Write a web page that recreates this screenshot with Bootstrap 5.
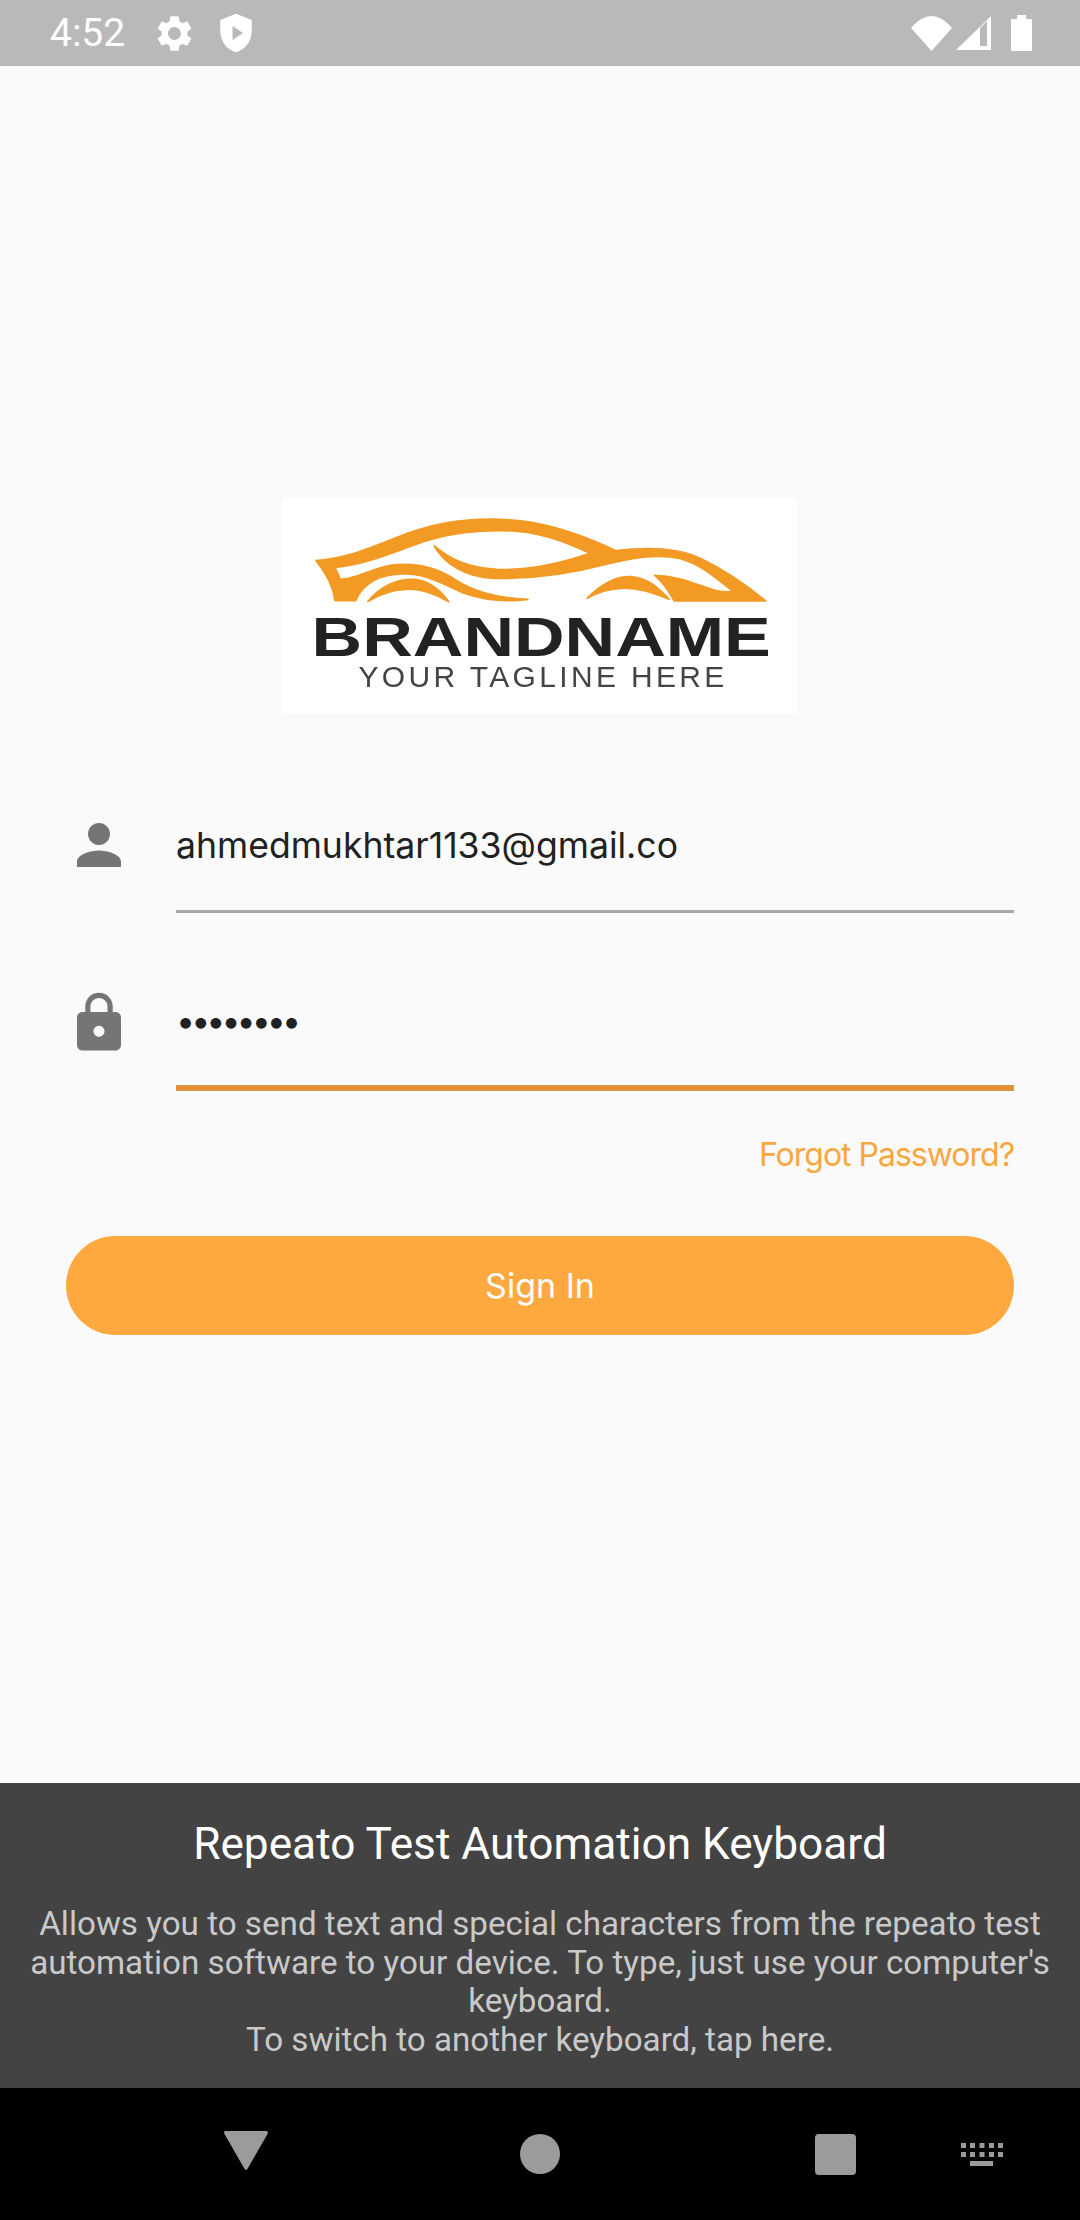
<!doctype html>
<html lang="en">

<head>
    <meta charset="utf-8">
    <meta name="viewport" content="width=device-width, initial-scale=1">
    <title>Sign In</title>
    <link href="https://cdn.jsdelivr.net/npm/bootstrap@5.3.1/dist/css/bootstrap.min.css" rel="stylesheet">
    <style>
        body {
            height: 2220px;
            overflow: hidden;
            background: #fafafa;
            font-family: "Inter", "Open Sans", sans-serif;
        }

        .status-strip {
            height: 66px;
            padding: 0 48px 0 50px;
            background: #b9b9b9;
            color: #fff;
            font-family: "Roboto", sans-serif;
            font-size: 39px;
        }

        .status-clock {
            margin-right: 28px;
            line-height: 66px;
        }

        .status-shield {
            margin-left: 19px;
        }

        .status-battery {
            margin-left: 20px;
        }

        .login-area {
            padding: 432px 66px 0;
        }

        .brand-logo {
            display: block;
            width: 515px;
            height: 216px;
            margin: 0 auto 98px 216px;
            background: #fff;
            filter: blur(.6px);
        }

        .car-shape {
            fill: #f39a24;
            stroke: #f39a24;
            stroke-width: 5;
            stroke-linejoin: round;
        }

        .field-icon {
            flex: 0 0 66px;
            width: 66px;
            height: 66px;
            margin-right: 44px;
            fill: #757575;
        }

        .field-row {
            margin-bottom: 77px;
        }

        .field-input.form-control {
            height: 101px;
            padding: 0 0 32px;
            border: 0;
            border-bottom: 3px solid #a8a8a8;
            border-radius: 0;
            background: transparent;
            color: #212121;
            font-size: 35.600px;
            box-shadow: none;
        }

        .field-input.field-active {
            padding-bottom: 35px;
            border-bottom: 6px solid #e09439;
            font-size: 34px;
            letter-spacing: -4px;
        }

        .forgot-row {
            margin-top: -35px;
            margin-bottom: 59px;
            color: #f9a63f;
            font-size: 32px;
            letter-spacing: -1px;
            line-height: 44px;
        }

        .signin-btn.btn {
            height: 99px;
            background: #fea93f;
            border: 0;
            color: #fff;
            font-size: 34px;
        }

        .keyboard-panel {
            height: 305px;
            padding: 36px 22px 0;
            background: #434343;
            font-family: "Roboto", sans-serif;
        }

        .keyboard-title {
            margin: 0 0 36px;
            color: #fff;
            font-size: 44.200px;
            font-weight: 400;
            line-height: 50px;
        }

        .keyboard-text {
            margin: 0;
            color: #c9c9c9;
            font-size: 33.200px;
            line-height: 38.700px;
        }

        .nav-strip {
            height: 132px;
            background: #000;
            fill: #9b9b9b;
        }

        .nav-back {
            margin: 43px 0 0 224px;
        }

        .nav-home {
            margin: 46px 0 0 252px;
        }

        .nav-recent {
            margin: 46px 0 0 255px;
        }

        .nav-keyboard {
            margin: 55px 0 0 105px;
        }
    </style>
</head>

<body class="d-flex flex-column">
    <div class="status-strip d-flex align-items-center flex-shrink-0">
        <span class="status-clock">4:52</span>
        <svg width="43" height="43" viewBox="0 0 24 24" fill="#fff">
            <path d="M19.14 12.94c.04-.3.06-.61.06-.94 0-.32-.02-.64-.07-.94l2.03-1.58c.18-.14.23-.41.12-.61l-1.92-3.32c-.12-.22-.37-.29-.59-.22l-2.39.96c-.5-.38-1.03-.7-1.62-.94l-.36-2.54c-.04-.24-.24-.41-.48-.41h-3.84c-.24 0-.43.17-.47.41l-.36 2.54c-.59.24-1.13.57-1.62.94l-2.39-.96c-.22-.08-.47 0-.59.22L2.74 8.87c-.12.21-.08.47.12.61l2.03 1.58c-.05.3-.09.63-.09.94s.02.64.07.94l-2.03 1.58c-.18.14-.23.41-.12.61l1.92 3.32c.12.22.37.29.59.22l2.39-.96c.5.38 1.03.7 1.62.94l.36 2.54c.05.24.24.41.48.41h3.84c.24 0 .44-.17.47-.41l.36-2.54c.59-.24 1.13-.56 1.62-.94l2.39.96c.22.08.47 0 .59-.22l1.92-3.32c.12-.22.07-.47-.12-.61l-2.01-1.58zM12 15.6c-1.98 0-3.6-1.62-3.6-3.6s1.62-3.6 3.6-3.6 3.6 1.62 3.6 3.6-1.62 3.6-3.6 3.6z" />
        </svg>
        <svg class="status-shield" width="42" height="42" viewBox="0 0 24 24" fill="#fff">
            <path fill-rule="evenodd" d="M12 1 3 4.5V11c0 5.5 3.8 10.700 9 12 5.200-1.300 9-6.500 9-12V4.500zM10 8l6 4-6 4z" />
        </svg>
        <svg class="ms-auto" width="41" height="35" viewBox="0 0 41 35" fill="#fff">
            <path d="M0 12Q20.500-12 41 12L20.500 35z" />
        </svg>
        <svg class="ms-1" width="35" height="34" viewBox="0 0 35 34" fill="#fff">
            <path d="M0 34 35 0v34z" />
            <path fill="#b9b9b9" d="M24 12l7-7v25h-7z" />
        </svg>
        <svg class="status-battery" width="21" height="36" viewBox="0 0 21 36" fill="#fff">
            <path d="M6 0h9v4h5a1 1 0 0 1 1 1v30a1 1 0 0 1-1 1H1a1 1 0 0 1-1-1V5a1 1 0 0 1 1-1h5z" />
        </svg>
    </div>

    <main class="login-area flex-grow-1">
        <svg class="brand-logo" viewBox="36 24 1495 648" preserveAspectRatio="none">
            <path class="car-shape" d="M135 212C230 205 300 170 400 130 520 85 640 78 760 97 860 115 940 150 1005 182 1100 170 1190 175 1250 205 1330 245 1390 290 1440 333L1175 333C1160 305 1140 275 1118 256 1190 258 1240 285 1290 300 1310 306 1330 306 1345 304 1300 270 1260 225 1190 205 1120 190 1050 205 980 222 880 250 760 268 650 265 570 260 510 225 478 168 520 205 570 232 660 238 760 242 860 215 930 190 870 160 800 130 720 124 620 116 510 130 420 165 340 195 270 225 190 232L205 268C250 268 290 238 350 226 430 215 490 235 540 270 600 310 670 325 750 328 680 338 620 330 560 308 500 280 450 250 390 252 320 252 270 280 250 332L190 332C185 290 165 250 135 212Z" />
            <path class="car-shape" d="M285 335C320 290 370 265 420 268 465 272 495 300 520 335 480 312 440 296 400 298 360 298 320 312 285 335Z" />
            <path class="car-shape" d="M922 325C960 285 1000 258 1050 260 1100 265 1130 295 1160 328 1110 306 1060 292 1020 295 985 297 950 307 922 325Z" />
            <text x="122" y="497" textLength="1333" lengthAdjust="spacingAndGlyphs" font-family="Liberation Sans, sans-serif" font-weight="700" font-size="165" fill="#222">BRANDNAME</text>
            <text x="258" y="590" textLength="1062" lengthAdjust="spacing" font-family="Liberation Sans, sans-serif" font-size="87" fill="#444">YOUR TAGLINE HERE</text>
        </svg>

        <div class="field-row d-flex align-items-start">
            <svg class="field-icon" viewBox="0 0 24 24">
                <path d="M12 12c2.210 0 4-1.790 4-4s-1.790-4-4-4-4 1.790-4 4 1.790 4 4 4zm0 2c-2.670 0-8 1.340-8 4v2h16v-2c0-2.660-5.330-4-8-4z" />
            </svg>
            <input class="field-input form-control" type="text" value="ahmedmukhtar1133@gmail.co">
        </div>
        <div class="field-row d-flex align-items-start">
            <svg class="field-icon" viewBox="0 0 24 24">
                <path d="M18 8h-1V6c0-2.760-2.240-5-5-5S7 3.240 7 6v2H6c-1.100 0-2 .9-2 2v10c0 1.100.9 2 2 2h12c1.100 0 2-.9 2-2V10c0-1.100-.9-2-2-2zm-6 9c-1.100 0-2-.9-2-2s.9-2 2-2 2 .9 2 2-.9 2-2 2zm3.100-9H8.900V6c0-1.710 1.390-3.100 3.100-3.100 1.710 0 3.100 1.390 3.100 3.100v2z" />
            </svg>
            <input class="field-input field-active form-control" type="password" value="password">
        </div>

        <div class="forgot-row text-end">Forgot Password?</div>
        <button class="signin-btn btn rounded-pill w-100" type="button">Sign In</button>
    </main>

    <div class="keyboard-panel text-center flex-shrink-0">
        <h2 class="keyboard-title">Repeato Test Automation Keyboard</h2>
        <p class="keyboard-text">Allows you to send text and special characters from the repeato test automation software to your device. To type, just use your computer's keyboard.<br>To switch to another keyboard, tap here.</p>
    </div>

    <div class="nav-strip d-flex align-items-start flex-shrink-0">
        <svg class="nav-back" width="44" height="39" viewBox="0 0 44 39">
            <path d="M2 0h40c1.500 0 2.300 1 1.800 2.500L24 37c-1.200 2.500-2.800 2.500-4 0L.2 2.500C-.3 1 .5 0 2 0z" />
        </svg>
        <svg class="nav-home" width="40" height="40" viewBox="0 0 40 40">
            <circle cx="20" cy="20" r="20" />
        </svg>
        <svg class="nav-recent" width="41" height="41" viewBox="0 0 41 41">
            <rect width="41" height="41" rx="4" />
        </svg>
        <svg class="nav-keyboard" width="42" height="23" viewBox="0 0 42 23">
            <path d="M0 0h5v5H0zM9 0h5v5H9zM18.500 0h5v5h-5zM28 0h5v5h-5zM37 0h5v5h-5zM0 9h5v5H0zM9 9h5v5H9zM18.500 9h5v5h-5zM28 9h5v5h-5zM37 9h5v5h-5zM9 18h23v5H9z" />
        </svg>
    </div>
    <script src="https://cdn.jsdelivr.net/npm/bootstrap@5.3.1/dist/js/bootstrap.bundle.min.js"></script>
</body>

</html>
